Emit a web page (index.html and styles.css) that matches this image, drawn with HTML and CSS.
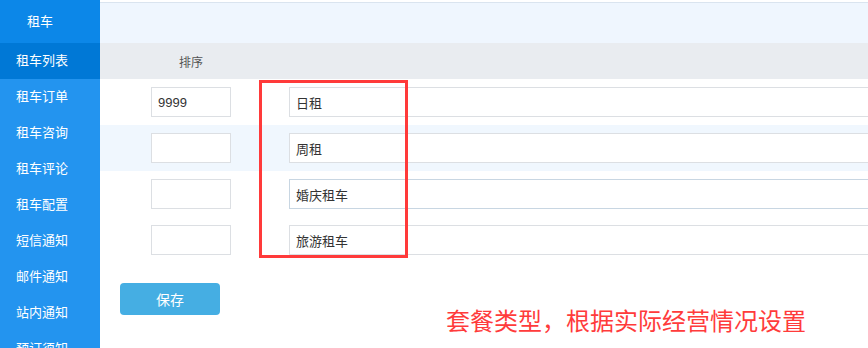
FILE: index.html
```html
<!DOCTYPE html>
<html lang="zh-CN">
<head>
  <meta charset="UTF-8" />
  <meta name="viewport" content="width=device-width, initial-scale=1.0" />
  <title>租车 - 套餐类型</title>
  <link rel="stylesheet" href="styles.css">
</head>
<body>
  <div class="layout">
    <!-- Sidebar menu -->
    <nav class="sidebar">
      <div class="side-title">租车</div>
      <a class="side-item active">租车列表</a>
      <a class="side-item">租车订单</a>
      <a class="side-item">租车咨询</a>
      <a class="side-item">租车评论</a>
      <a class="side-item">租车配置</a>
      <a class="side-item">短信通知</a>
      <a class="side-item">邮件通知</a>
      <a class="side-item">站内通知</a>
      <a class="side-item">预订须知</a>
    </nav>

    <!-- Main content -->
    <main class="main">
      <div class="topbar"></div>

      <div class="type-table">
        <div class="row head">
          <div class="cell sort">排序</div>
          <div class="cell name"></div>
        </div>
        <div class="row">
          <div class="cell sort"><input type="text" class="sort-input" value="9999" /></div>
          <div class="cell name"><input type="text" class="name-input" value="日租" /></div>
        </div>
        <div class="row striped">
          <div class="cell sort"><input type="text" class="sort-input" value="" /></div>
          <div class="cell name"><input type="text" class="name-input" value="周租" /></div>
        </div>
        <div class="row">
          <div class="cell sort"><input type="text" class="sort-input" value="" /></div>
          <div class="cell name"><input type="text" class="name-input hover" value="婚庆租车" /></div>
        </div>
        <div class="row">
          <div class="cell sort"><input type="text" class="sort-input" value="" /></div>
          <div class="cell name"><input type="text" class="name-input" value="旅游租车" /></div>
        </div>

        <!-- annotation box over the name column -->
        <div class="mark-box"></div>
      </div>

      <div class="actions">
        <button class="save-button" type="button">保存</button>
        <p class="note">套餐类型，根据实际经营情况设置</p>
      </div>
    </main>
  </div>
</body>
</html>
```

FILE: styles.css
```css
/* ------------------ Global Styles ------------------ */
body {
  margin: 0;
  font-family: "Liberation Sans", "Noto Sans CJK SC", sans-serif;
  background-color: #fff;
  overflow: hidden;
}
.layout {
  display: flex;
  height: 348px;
}

/* ------------------ Sidebar ------------------ */
.sidebar {
  width: 100px;
  flex-shrink: 0;
  background-color: #2394ef;
  color: #fff;
  font-size: 13px;
}
.side-title {
  height: 43px;
  line-height: 43px;
  padding-left: 27px;
  background-color: #0c87e8;
}
.side-item {
  display: block;
  height: 36px;
  line-height: 36px;
  padding-left: 16px;
  cursor: pointer;
}
.side-item.active {
  background-color: #0078d6;
}

/* ------------------ Main ------------------ */
.main {
  flex: 1;
  overflow: hidden;
  padding-top: 2px;
}
.topbar {
  height: 40px;
  background-color: #eff6fe;
  border-top: 1px solid #dae4ef;
}
.type-table {
  position: relative;
}
.row {
  display: flex;
  height: 46px;
  align-items: center;
}
.row.head {
  height: 36px;
  background-color: #e9ecf0;
  color: #555;
  font-size: 12px;
}
.row.striped {
  background-color: #f0f7fe;
}
.cell.sort {
  width: 182px;
  flex-shrink: 0;
  text-align: center;
}
.cell.name {
  padding-left: 7px;
}
input[type="text"] {
  height: 30px;
  box-sizing: border-box;
  border: 1px solid #dcdfe3;
  padding: 0 6px;
  font-family: inherit;
  font-size: 13px;
  color: #333;
  background-color: #fff;
  outline: none;
}
.sort-input {
  width: 80px;
  display: block;
  margin: 0 auto;
}
.name-input {
  width: 620px;
  display: block;
}
.name-input.hover {
  border-color: #c8d6e2;
}
.mark-box {
  position: absolute;
  left: 159px;
  top: 37px;
  width: 143px;
  height: 172px;
  border: 3px solid #ff3a3a;
}

/* ------------------ Actions ------------------ */
.actions {
  display: flex;
  align-items: flex-start;
  padding: 20px 0 0 20px;
}
.save-button {
  width: 100px;
  height: 32px;
  border: none;
  border-radius: 4px;
  background-color: #45aee3;
  color: #fff;
  font-family: inherit;
  font-size: 14px;
  cursor: pointer;
}
.note {
  margin: 27px 0 0 226px;
  font-size: 24px;
  line-height: 24px;
  color: #ff3b3b;
  white-space: nowrap;
}
```
